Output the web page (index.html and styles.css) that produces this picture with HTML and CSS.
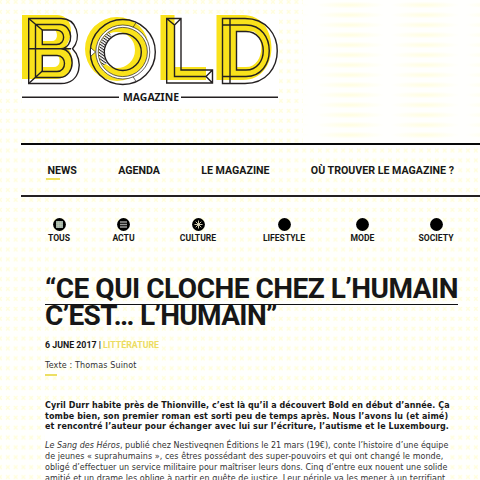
FILE: index.html
```
<!DOCTYPE html>
<html lang="fr">
<head>
<meta charset="utf-8">
<title>Bold Magazine</title>
<link rel="stylesheet" href="styles.css">
</head>
<body>
<svg class="backdrop" width="480" height="480" aria-hidden="true">
  <defs>
    <pattern id="crosses" x="4" y="8" width="7.8" height="9.9" patternUnits="userSpaceOnUse"><path d="M2 2l3.600 3.600m0-3.600l-3.600 3.600" stroke="#fffddc" stroke-width="1.400"/></pattern>
    <radialGradient id="glow"><stop offset="0" stop-color="#fffde0"/><stop offset="1" stop-color="#fffffd"/></radialGradient>
    <pattern id="bands" x="312" y="0" width="75" height="10" patternUnits="userSpaceOnUse"><rect width="75" height="10" fill="#fffffd"/><ellipse cx="38" cy="5" rx="35" ry="3.500" fill="url(#glow)"/></pattern>
  </defs>
  <rect width="480" height="480" fill="url(#crosses)"/>
  <rect x="303" width="177" height="143" fill="url(#bands)"/>
</svg>
<header class="masthead">
  <svg class="logo" viewBox="20 12 260 94" width="260" height="94">
    <defs><pattern id="hatch" width="2.400" height="2.400" patternUnits="userSpaceOnUse" patternTransform="rotate(35)"><rect width="2.400" height="2.400" fill="#fff"/><rect width="2.400" height="1" fill="#242021"/></pattern></defs>
    <path d="M22 14H279V104H22Z" fill="#fff"/>
    <g fill="#f9e21b">
      <path fill-rule="evenodd" d="M22 15H57C70 15 76 31 66 46C78 58 72 79 56 79H22ZM42.300 30V41H52C58 41 58 33 55 30ZM42.300 55.500V67H54C60 67 61 60 58 55.500Z"/>
      <path fill-rule="evenodd" d="M117 17a32 32 0 1 0 0 64a32 32 0 1 0 0-64ZM117 32a18 18 0 1 1 0 36a18 18 0 1 1 0-36Z"/>
      <path d="M160.500 15H174.500V67H206V80H160.500Z"/>
      <path fill-rule="evenodd" d="M216.500 15H243C281 15 281 80 243 80H216.500ZM236.500 31.500V67H246C263 67 266 40 254 31.500Z"/>
    </g>
    <g fill="none" stroke="#242021" stroke-width="1.400">
      <path d="M28.700 18.500H61C77 18.500 82 38 72.500 48.800C84 60 81 83.500 61 83.500H28.700Z"/>
      <path d="M35.500 24.500H60C73 25 75 47 61 48.800C76 50 76 76 60 77.500H35.500ZM28.700 48.800H71M28.700 18.500L42.300 30M28.700 83.500L42.300 71"/>
      <path d="M42.300 30H56.500C66 30 66 44.500 56.500 44.500H42.300ZM42.300 55.500H57C67 55.500 67 71.500 57 71.500H42.300Z"/>
      <circle cx="122.800" cy="52" r="32.500"/>
      <circle cx="122.800" cy="52" r="25.800" stroke="#fff" stroke-width="2.600"/>
      <g stroke-width=".7"><circle cx="122.800" cy="52" r="27"/><circle cx="122.800" cy="52" r="24.600"/><path d="M133 27.500l3-5M133 76.500l3 5"/><path fill="#fff" d="M91 48l4.500 4l-4.500 4"/></g>
      <path stroke="url(#hatch)" stroke-width="5" d="M110.500 34.400A21.500 21.500 0 0 0 105.200 64.300"/>
      <circle cx="122.800" cy="52" r="18.500"/>
      <path d="M166.700 18.500H181V70H212.500V83H166.700ZM174.500 25V76.500H206M166.700 18.500L174.500 25L181 18.500M212.500 70L206 76.500L212.500 83"/>
      <path d="M222.500 18.500H245C288 18.500 288 83.500 245 83.500H222.500ZM230 18.500V83.500M236.500 31.500H246C269 31.500 269 70 246 70H236.500ZM222.500 25H246C277 25 277 76.500 246 76.500H222.500"/>
    </g>
    <path d="M22 97.300H119M181 97.300H278" stroke="#242021" stroke-width="1.400"/>
    <text class="wordmark" x="123" y="100.500" textLength="56" lengthAdjust="spacingAndGlyphs">MAGAZINE</text>
  </svg>
</header>
<nav class="main-nav">
  <a class="active">NEWS</a><a>AGENDA</a><a>LE MAGAZINE</a><a>OÙ TROUVER LE MAGAZINE ?</a>
</nav>
<nav class="topics">
  <a><svg viewBox="0 0 13 13"><circle cx="6.500" cy="6.500" r="6.400"/><path d="M3 3h7v7H3z" fill="#9caea6"/><path d="M5.300 3v7M7.700 3v7M3 5.300h7M3 7.700h7" stroke="#c8d1b7" stroke-width=".5"/></svg>TOUS</a>
  <a><svg viewBox="0 0 13 13"><circle cx="6.500" cy="6.500" r="6.400"/><path d="M3 4h7M3 6.500h7M3 9h7" stroke="#999" stroke-width="1.300"/></svg>ACTU</a>
  <a><svg viewBox="0 0 13 13"><circle cx="6.500" cy="6.500" r="6.400"/><path d="M6.500 2.500v8M2.500 6.500h8M3.700 3.700l5.600 5.600M9.300 3.700l-5.600 5.600" stroke="#e5e0c3" stroke-width=".9"/></svg>CULTURE</a>
  <a><svg viewBox="0 0 13 13"><circle cx="6.500" cy="6.500" r="6.400"/></svg>LIFESTYLE</a>
  <a><svg viewBox="0 0 13 13"><circle cx="6.500" cy="6.500" r="6.400"/></svg>MODE</a>
  <a><svg viewBox="0 0 13 13"><circle cx="6.500" cy="6.500" r="6.400"/></svg>SOCIETY</a>
</nav>
<main>
  <h1><span class="first">“CE QUI CLOCHE CHEZ L’HUMAIN</span><span class="second">C’EST… L’HUMAIN”</span></h1>
  <p class="meta">6 JUNE 2017 | <span>LITTÉRATURE</span></p>
  <p class="author">Texte : Thomas Suinot</p>
  <article>
    <p class="intro">Cyril Durr habite près de Thionville, c’est là qu’il a découvert Bold en début d’année. Ça<br><span class="wide">tombe bien, son premier roman est sorti peu de temps après. Nous l’avons lu (et aimé)</span><br><span class="wide">et rencontré l’auteur pour échanger avec lui sur l’écriture, l’autisme et le Luxembourg.</span></p>
    <p class="body"><em>Le Sang des Héros</em>, publié chez Nestiveqnen Éditions le 21 mars (19€), conte l’histoire d’une équipe<br><span class="loose">de jeunes « suprahumains », ces êtres possédant des super-pouvoirs et qui ont changé le monde,</span><br><span class="medium">obligé d’effectuer un service militaire pour maîtriser leurs dons. Cinq d’entre eux nouent une solide</span><br><span class="loose">amitié et un drame les oblige à partir en quête de justice. Leur périple va les mener à un terrifiant</span></p>
  </article>
</main>
</body>
</html>
```
FILE: styles.css
```
* { box-sizing: border-box; }
body { margin: 0; height: 480px; overflow: hidden; background: #fffffd; color: #171717; font-family: Roboto, sans-serif; }
.backdrop { position: absolute; inset: 0; z-index: -1; }
.masthead { height: 143px; padding: 12px 0 0 20px; }
.logo { display: block; }
.wordmark { font: 700 10px "Noto Sans", sans-serif; fill: #171717; }
.main-nav { height: 54px; margin-left: 21px; padding: 0 26px 0 26.5px; border-top: 2px solid #080808; border-bottom: 2px solid #242021; display: flex; justify-content: space-between; align-items: center; font-size: 10.65px; font-weight: 700; white-space: nowrap; }
.main-nav a { position: relative; }
.active::after { content: ""; position: absolute; left: -2px; top: 14px; width: 14px; height: 2px; background: #eee05c; }
.topics { height: 76px; padding: 21px 0 0 23px; display: grid; grid-template-columns: 72px 57px 92px 80px 77px 70px; font-size: 8.6px; font-weight: 700; line-height: 12px; }
.topics a { display: flex; flex-direction: column; align-items: center; gap: 1px; }
.topics svg { width: 13px; height: 13px; }
main { padding-left: 45px; white-space: nowrap; }
h1 { margin: 0; font-size: 28px; line-height: 26px; }
h1 span { display: block; width: 413px; }
h1 .first { height: 32px; padding-top: 3px; border-bottom: 1px solid #111; letter-spacing: -.5px; }
h1 .second { height: 27px; margin-top: -2px; letter-spacing: -.65px; }
p { margin: 0; }
.meta { margin-top: 9px; font-size: 8.8px; line-height: 12px; font-weight: 700; }
.meta span { color: #ecdc60; }
.author { margin-top: 9px; padding-bottom: 3px; font: 8px/11px "DejaVu Sans", sans-serif; letter-spacing: .14px; color: #333; }
.author::after { content: ""; display: block; width: 12px; height: 2px; margin-top: 3px; background: #ecdf63; }
article { width: 405px; margin-top: 22px; height: 90px; background: #fff; font-family: "DejaVu Sans", sans-serif; }
.intro { font-size: 8px; line-height: 10.7px; font-weight: 700; letter-spacing: .07px; }
.intro .wide { letter-spacing: .1px; }
.body { margin-top: 8px; font-size: 8px; line-height: 10.9px; color: #333; letter-spacing: .02px; }
.body .loose { letter-spacing: .06px; }
.body .medium { letter-spacing: .03px; }
```
